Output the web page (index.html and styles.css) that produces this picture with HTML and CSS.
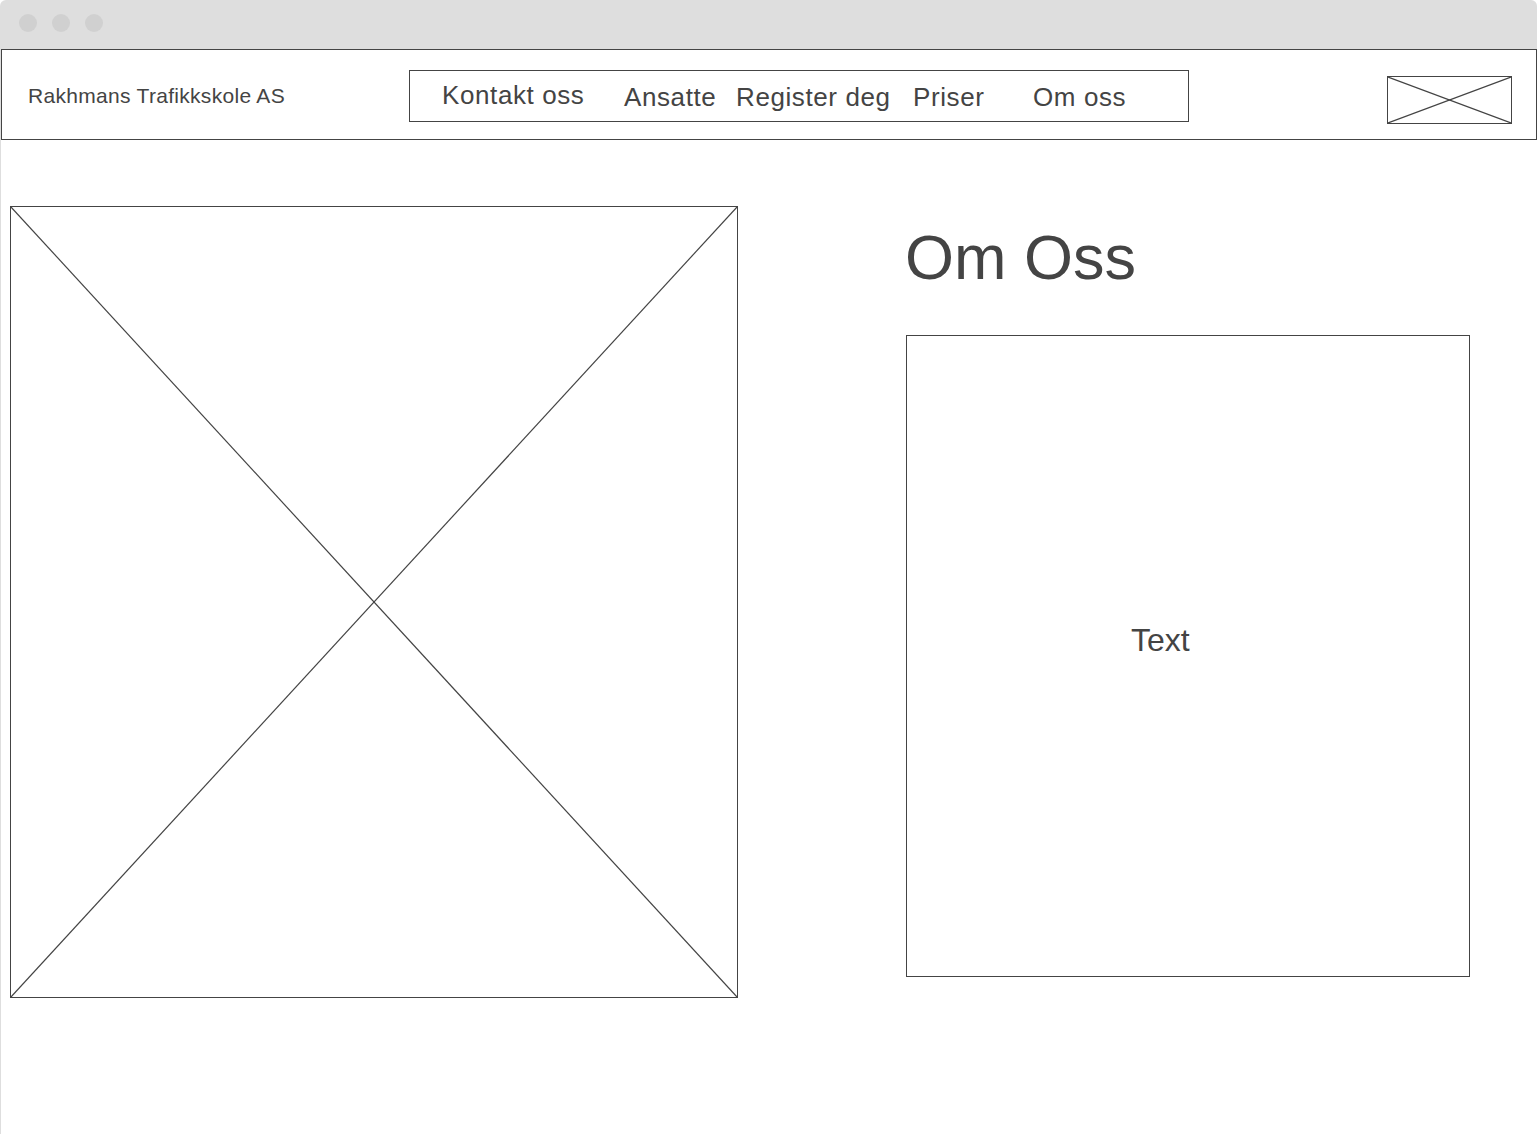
FILE: index.html
```html
<!DOCTYPE html>
<html lang="no">
<head>
<meta charset="utf-8">
<title>Rakhmans Trafikkskole AS – Om oss</title>
<link rel="stylesheet" href="styles.css">
</head>
<body>
<div class="window">
  <div class="titlebar">
    <span class="dot"></span>
    <span class="dot"></span>
    <span class="dot"></span>
  </div>
  <div class="viewport">
    <header class="header">
      <div class="logo">Rakhmans Trafikkskole AS</div>
      <nav class="nav">
        <a class="nav-item nav-first">Kontakt oss</a>
        <a class="nav-item">Ansatte</a>
        <a class="nav-item">Register deg</a>
        <a class="nav-item">Priser</a>
        <a class="nav-item">Om oss</a>
      </nav>
      <div class="placeholder header-img">
        <svg class="cross" viewBox="0 0 100 100" preserveAspectRatio="none"><line x1="0" y1="0" x2="100" y2="100"/><line x1="0" y1="100" x2="100" y2="0"/></svg>
      </div>
    </header>
    <main class="content">
      <div class="placeholder hero-img">
        <svg class="cross" viewBox="0 0 100 100" preserveAspectRatio="none"><line x1="0" y1="0" x2="100" y2="100"/><line x1="0" y1="100" x2="100" y2="0"/></svg>
      </div>
      <section class="about">
        <h1 class="about-title">Om Oss</h1>
        <div class="about-box">
          <p class="about-text">Text</p>
        </div>
      </section>
    </main>
  </div>
</div>
</body>
</html>
```
FILE: styles.css
```css
* { box-sizing: border-box; }

html, body {
  margin: 0;
  padding: 0;
  background: #ffffff;
}

body {
  font-family: "Liberation Sans", Arial, sans-serif;
  color: #444444;
  width: 1537px;
  height: 1134px;
  overflow: hidden;
}

.window {
  width: 1537px;
  height: 1134px;
  display: flex;
  flex-direction: column;
}

.titlebar {
  height: 49px;
  flex: none;
  background: #dedede;
  border-radius: 6px 6px 0 0;
  display: flex;
  align-items: flex-start;
  gap: 15px;
  padding: 14px 0 0 19px;
}

.dot {
  width: 18px;
  height: 18px;
  border-radius: 50%;
  background: #d0d0d0;
}

.viewport {
  flex: 1;
  border-left: 1px solid #dedede;
  display: flex;
  flex-direction: column;
}

.header {
  height: 91px;
  width: 1536px;
  flex: none;
  border: 1px solid #444444;
  display: flex;
  align-items: flex-start;
}

.logo {
  font-size: 21px;
  line-height: 1;
  margin: 35px 0 0 26px;
  width: 381px;
  flex: none;
  white-space: nowrap;
  letter-spacing: 0.3px;
}

.nav {
  margin-top: 20px;
  width: 780px;
  height: 52px;
  flex: none;
  border: 1px solid #444444;
  display: grid;
  grid-template-columns: 182px 112px 177px 120px auto;
  align-items: start;
  padding: 0 0 0 32px;
}

.nav-item {
  font-size: 26px;
  line-height: 1;
  letter-spacing: 0.6px;
  white-space: nowrap;
  color: #444444;
  margin-top: 13px;
}

.nav-first {
  margin-top: 11px;
}

.placeholder {
  position: relative;
  border: 1px solid #444444;
  background: #ffffff;
}

.cross {
  display: block;
  width: 100%;
  height: 100%;
}

.cross line {
  stroke: #444444;
  stroke-width: 1.2;
  vector-effect: non-scaling-stroke;
}

.header-img {
  margin: 26px 24px 0 auto;
  width: 125px;
  height: 48px;
}

.content {
  display: flex;
  align-items: flex-start;
  padding: 66px 0 0 9px;
}

.hero-img {
  width: 728px;
  height: 792px;
  flex: none;
}

.about {
  margin-left: 168px;
  display: flex;
  flex-direction: column;
}

.about-title {
  margin: 20px 0 0 -1px;
  height: 67px;
  font-size: 63px;
  line-height: 1;
  font-weight: 400;
  color: #444444;
}

.about-box {
  margin-top: 42px;
  width: 564px;
  height: 642px;
  border: 1px solid #444444;
  padding: 288px 0 0 224px;
}

.about-text {
  margin: 0;
  font-size: 32px;
  line-height: 1;
}
```
